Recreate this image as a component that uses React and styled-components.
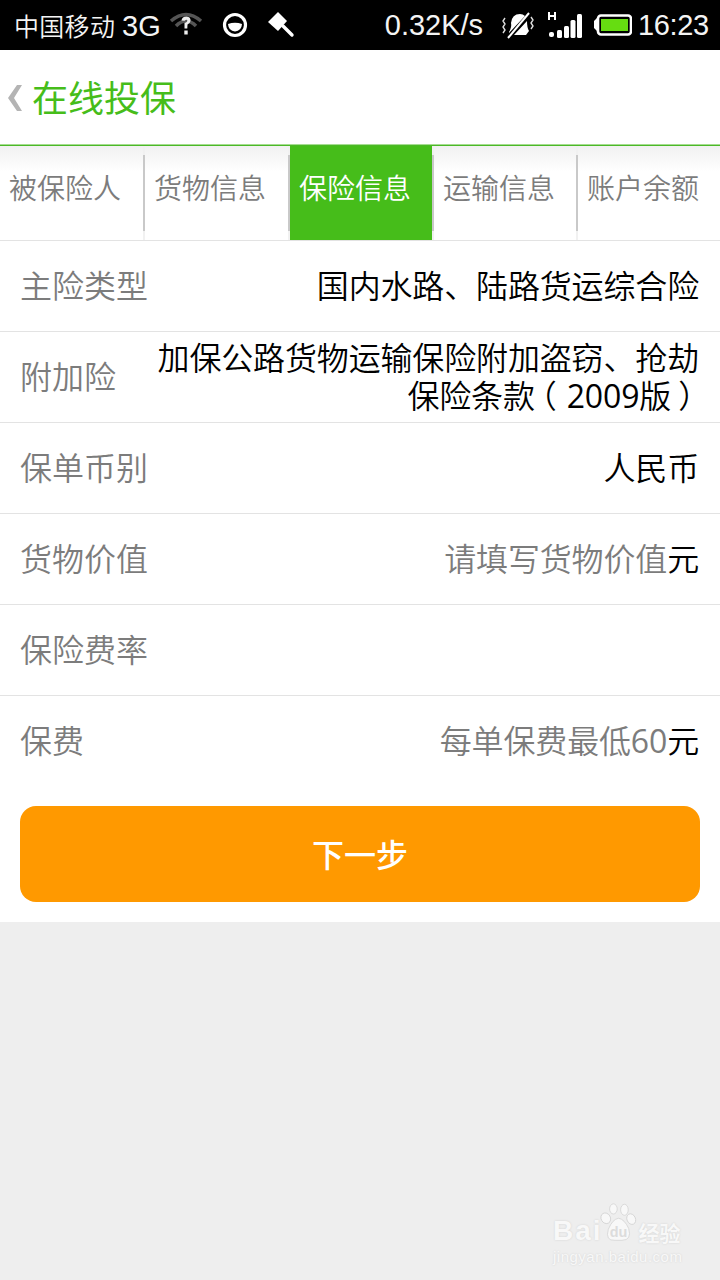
import React from "react";
import styled, { createGlobalStyle } from "styled-components";

const GlobalStyle = createGlobalStyle`
  html, body {
    margin: 0;
    padding: 0;
    background: #eeeeee;
  }
  body {
    font-family: "Open Sans", "Noto Sans CJK SC", sans-serif;
  }
`;

const Page = styled.div`
  position: relative;
  width: 720px;
  height: 1280px;
  overflow: hidden;
  background: #eeeeee;
`;

const StatusBar = styled.div`
  height: 50px;
  background: #000;
  color: #f4f4f4;
  display: flex;
  align-items: center;
  padding: 0 12px 0 14px;
  box-sizing: border-box;
`;

const Carrier = styled.span`
  font-family: "Noto Sans CJK SC", sans-serif;
  font-size: 25px;
  font-weight: 350;
  line-height: 50px;
  letter-spacing: 0.3px;
  white-space: nowrap;
  span {
    font-size: 29px;
    letter-spacing: 0;
    margin-left: 1px;
    font-family: "Liberation Sans", sans-serif;
  }
`;

const StatusGroup = styled.div`
  display: flex;
  align-items: center;
  gap: ${(p) => p.$gap || 0}px;
  margin-left: ${(p) => p.$left || 0}px;
`;

const StatusText = styled.span`
  font-family: "Liberation Sans", sans-serif;
  font-size: 29px;
  line-height: 50px;
  letter-spacing: ${(p) => (p.$tight ? "-0.4px" : "0")};
`;

const Header = styled.div`
  height: 94px;
  box-sizing: border-box;
  padding: 0 0 2px 6px;
  background: #fff;
  display: flex;
  align-items: center;
  gap: 8px;
`;

const BackSvg = styled.svg`
  flex: none;
  margin-top: 3px;
`;

const Title = styled.h1`
  margin: 0;
  color: #46bd1a;
  font-size: 36px;
  font-weight: 400;
  line-height: 50px;
  font-family: "Noto Sans CJK SC", sans-serif;
`;

const GreenRule = styled.div`
  height: 2px;
  box-sizing: border-box;
  background: #4cb827;
  border-top: 1px solid #a5dd90;
`;

const Tabs = styled.div`
  display: grid;
  grid-template-columns: 145px 145px 144px 144px 142px;
  height: 94px;
  background: linear-gradient(#f1f1f1, #ffffff 26px);
  border-bottom: 1px solid #e3e3e3;
`;

const Tab = styled.div`
  display: flex;
  align-items: center;
  box-sizing: border-box;
  padding: 0 0 12px 9px;
  font-size: 28px;
  font-weight: 350;
  white-space: nowrap;
  color: ${(p) => (p.$active ? "#ffffff" : "#7c7c7c")};
  font-family: "Noto Sans CJK SC", sans-serif;
  border-right: 2px solid transparent;
  background: ${(p) =>
    p.$active ? "linear-gradient(#46bd1a, #46bd1a) no-repeat left top / 142px 100%" : "none"};
  border-image: ${(p) =>
    p.$last
      ? "none"
      : "linear-gradient(#f1f1f1 0, #f1f1f1 10px, #c9c9c9 10px, #c9c9c9 84px, #f1f1f1 84px) 1"};
`;

const Form = styled.div`
  background: #fff;
  padding-bottom: 20px;
`;

const Row = styled.div`
  height: 90px;
  display: flex;
  align-items: center;
  justify-content: space-between;
  padding: 0 21px 0 20px;
  border-bottom: ${(p) => (p.$last ? "none" : "1px solid #e3e3e3")};
  font-family: "Open Sans", "Noto Sans CJK SC", sans-serif;
  font-size: 32px;
  font-weight: 350;
  line-height: 38px;
`;

const Label = styled.span`
  color: #7c7c7c;
  flex: none;
`;

const Value = styled.span`
  color: ${(p) => (p.$hint ? "#7c7c7c" : "#000")};
  text-align: right;
  letter-spacing: -0.15px;
  b {
    font-weight: 350;
    color: #000;
  }
`;

const ValueLine = styled.span`
  display: block;
  white-space: nowrap;
`;

const Num = styled.span`
  font-weight: 400;
`;

const Paren = styled.span`
  font-feature-settings: "halt";
  margin: ${(p) => (p.$close ? "0 5px 0 7px" : "0 10px 0 6px")};
`;

const NextButton = styled.button`
  display: block;
  width: 680px;
  height: 96px;
  margin: 20px auto 0;
  padding: 0 0 3px;
  border: 0;
  border-radius: 16px;
  background: #ff9900;
  color: #fff;
  font-size: 32px;
  font-weight: 500;
  font-family: "Noto Sans CJK SC", sans-serif;
`;

const Watermark = styled.div`
  position: absolute;
  left: 553px;
  top: 1201px;
  width: 130px;
  color: #f8f8f8;
  text-shadow: 0 0 2px #cfcfcf;
`;

const WmBrand = styled.div`
  display: flex;
  align-items: flex-end;
  height: 42px;
  white-space: nowrap;
`;

const WmBai = styled.span`
  flex: none;
  font-family: "Liberation Sans", sans-serif;
  font-weight: 700;
  font-size: 28px;
  line-height: 24px;
  letter-spacing: 2px;
`;

const WmMark = styled.svg`
  flex: none;
  margin-left: -4px;
`;

const WmCn = styled.span`
  flex: none;
  font-family: "Noto Sans CJK SC", sans-serif;
  font-size: 21px;
  line-height: 22px;
  font-weight: 700;
  margin-left: 1px;
`;

const WmUrl = styled.div`
  margin-top: 5px;
  font-family: "Liberation Sans", sans-serif;
  font-size: 15px;
  line-height: 18px;
  letter-spacing: 0.5px;
  white-space: nowrap;
`;

const WifiIcon = () => (
  <svg width="34" height="28" viewBox="0 0 34 28">
    <path d="M2 10 Q17 -3 32 10" fill="none" stroke="#555" strokeWidth="3.5" />
    <path d="M7 15 Q17 5 27 15" fill="none" stroke="#555" strokeWidth="3.5" />
    <path d="M12.5 9.5 Q13 5.5 17.5 5.5 Q22 5.8 21.5 10 Q21 12.5 18.5 13.5 L18.3 17.5 H15.5 L15.5 12 Q18.5 11.3 18.3 9.3 Q17.5 8 15.5 9.8 Z" fill="#eee" />
    <rect x="15.3" y="19.5" width="3.4" height="4" fill="#eee" />
  </svg>
);

const SyncIcon = () => (
  <svg width="26" height="26" viewBox="0 0 26 26">
    <circle cx="13" cy="13" r="10.5" fill="none" stroke="#fff" strokeWidth="3.2" />
    <path d="M6 12 Q13 9.5 20 12 Q19.5 19 13 19.5 Q6.5 19 6 12 Z" fill="#fff" />
  </svg>
);

const BrushIcon = () => (
  <svg width="28" height="28" viewBox="0 0 28 28">
    <path d="M1 11 L11 1 L20 10 L11 20 Z" fill="#fff" />
    <path d="M16 15 L25 24" stroke="#fff" strokeWidth="3.4" strokeLinecap="round" />
  </svg>
);

const MuteIcon = () => (
  <svg width="32" height="28" viewBox="0 0 32 28">
    <path d="M7 21 Q10 16 9 12 Q10 3 18 3 Q21 3 23 5 L7 22 Z" fill="#fff" />
    <path d="M12 24 L25 10 Q25 17 27 20 L24 24 Z" fill="#fff" />
    <path d="M6 27 L27 2" stroke="#fff" strokeWidth="2" />
    <path d="M3 7 L1 10 L3 13 L1 16 L3 19 L1 22 M29 6 L31 9 L29 12 L31 15 L29 18" fill="none" stroke="#ddd" strokeWidth="1.4" />
  </svg>
);

const SignalIcon = () => (
  <svg width="34" height="28" viewBox="0 0 34 28">
    <path d="M1 1 V9 M7 1 V9 M1 5 H7" stroke="#fff" strokeWidth="2" fill="none" />
    <rect x="1" y="21" width="5" height="5" rx="2" fill="#fff" />
    <rect x="9" y="19" width="5" height="8" rx="1.5" fill="#fff" />
    <rect x="16" y="15" width="5" height="12" rx="1.5" fill="#fff" />
    <rect x="22.5" y="9" width="5" height="18" rx="1.5" fill="#fff" />
    <rect x="29" y="3" width="5" height="24" rx="1.5" fill="#fff" />
  </svg>
);

const BatteryIcon = () => (
  <svg width="38" height="22" viewBox="0 0 38 22">
    <path d="M0 7 L3 4 V17 L0 14 Z" fill="#fff" />
    <rect x="4" y="1.5" width="33" height="19" rx="3" fill="none" stroke="#fff" strokeWidth="2.6" />
    <rect x="7" y="5" width="27" height="12" fill="#66dd11" />
  </svg>
);

const BackIcon = () => (
  <BackSvg width="18" height="30" viewBox="0 0 18 30">
    <path d="M16 2 H11 L2 15 L11 28 H16 L8 15 Z" fill="#b4b4b4" />
  </BackSvg>
);

const PawMark = () => (
  <WmMark width="39" height="41" viewBox="0 0 46 46" fill="#f8f8f8" stroke="#d4d4d4" strokeWidth="1">
    <ellipse cx="8" cy="18" rx="5.5" ry="6.5" transform="rotate(-30 8 18)" />
    <ellipse cx="17" cy="7" rx="4.5" ry="6" />
    <ellipse cx="30" cy="8" rx="4.5" ry="6.5" />
    <ellipse cx="38" cy="19" rx="5" ry="6.5" transform="rotate(-25 38 19)" />
    <path d="M23 18 Q30 19 35 30 Q39 44 27 44 H19 Q7 45 11 31 Q16 19 23 18 Z" />
    <text x="23" y="40" textAnchor="middle" fontFamily="Liberation Sans" fontWeight="700" fontSize="17" fill="#dcdcdc" stroke="none" style={{ textShadow: "none" }}>
      du
    </text>
  </WmMark>
);

const tabs = ["被保险人", "货物信息", "保险信息", "运输信息", "账户余额"];

const App = () => {
  return (
    <Page>
      <GlobalStyle />
      <StatusBar>
        <Carrier>
          中国移动 <span>3G</span>
        </Carrier>
        <StatusGroup $left={8} $gap={19}>
          <WifiIcon />
          <SyncIcon />
          <BrushIcon />
        </StatusGroup>
        <StatusGroup $left={90}>
          <StatusText>0.32K/s</StatusText>
        </StatusGroup>
        <StatusGroup $left={19} $gap={14}>
          <MuteIcon />
          <SignalIcon />
        </StatusGroup>
        <StatusGroup $left={12} $gap={6}>
          <BatteryIcon />
          <StatusText $tight>16:23</StatusText>
        </StatusGroup>
      </StatusBar>
      <Header>
        <BackIcon />
        <Title>在线投保</Title>
      </Header>
      <GreenRule />
      <Tabs>
        {tabs.map((t, i) => (
          <Tab key={t} $active={i === 2} $last={i === 4}>
            {t}
          </Tab>
        ))}
      </Tabs>
      <Form>
        <Row>
          <Label>主险类型</Label>
          <Value>国内水路、陆路货运综合险</Value>
        </Row>
        <Row>
          <Label>附加险</Label>
          <Value>
            <ValueLine>加保公路货物运输保险附加盗窃、抢劫</ValueLine>
            <ValueLine>
              保险条款<Paren>（</Paren>
              <Num>2009</Num>版<Paren $close>）</Paren>
            </ValueLine>
          </Value>
        </Row>
        <Row>
          <Label>保单币别</Label>
          <Value>人民币</Value>
        </Row>
        <Row>
          <Label>货物价值</Label>
          <Value $hint>
            请填写货物价值<b>元</b>
          </Value>
        </Row>
        <Row>
          <Label>保险费率</Label>
        </Row>
        <Row $last>
          <Label>保费</Label>
          <Value $hint>
            每单保费最低<Num>60</Num>
            <b>元</b>
          </Value>
        </Row>
        <NextButton>下一步</NextButton>
      </Form>
      <Watermark>
        <WmBrand>
          <WmBai>Bai</WmBai>
          <PawMark />
          <WmCn>经验</WmCn>
        </WmBrand>
        <WmUrl>jingyan.baidu.com</WmUrl>
      </Watermark>
    </Page>
  );
};

export default App;
